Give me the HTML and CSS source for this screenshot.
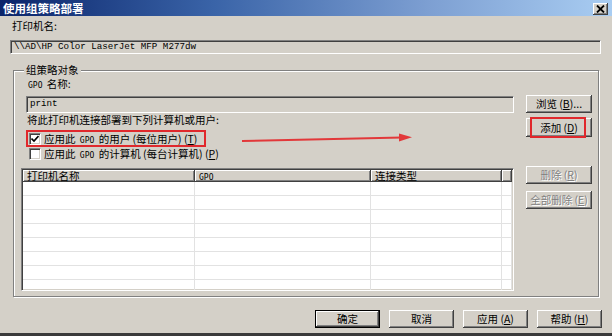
FILE: index.html
```html
<!DOCTYPE html>
<html lang="zh-CN">
<head>
    <meta charset="UTF-8">
    <title>使用组策略部署</title>
    <link rel="stylesheet" href="styles.css">
</head>
<body>
<div class="window">
    <div class="titlebar">
        <span class="title">使用组策略部署</span>
        <span class="close-btn">
            <svg width="9" height="8" viewBox="0 0 9 8"><path d="M1 0.5 L8 7.5 M8 0.5 L1 7.5" stroke="#000" stroke-width="1.8"/></svg>
        </span>
    </div>

    <div class="body">
        <div class="label printer-label">打印机名:</div>
        <div class="readonly-box mono">\\AD\HP Color LaserJet MFP M277dw</div>

        <fieldset class="group">
            <legend class="label">组策略对象</legend>
            <div class="label gpo-label"><span class="small-latin">GPO</span> 名称:</div>

            <div class="group-main">
                <div class="left-col">
                    <div class="edit-box mono">print</div>
                    <div class="label deploy-label">将此打印机连接部署到下列计算机或用户:</div>

                    <div class="check-row check-highlight">
                        <span class="checkbox">
                            <svg width="8" height="8" viewBox="0 0 8 8"><path d="M0.5 3.5 L3 6 L7.5 1" fill="none" stroke="#000" stroke-width="1.6"/></svg>
                        </span>
                        <span class="label">应用此 <span class="small-latin">GPO</span> 的用户 (每位用户) (<u>T</u>)</span>
                    </div>
                    <div class="check-row check-plain">
                        <span class="checkbox"></span>
                        <span class="label">应用此 <span class="small-latin">GPO</span> 的计算机 (每台计算机) (<u>P</u>)</span>
                    </div>

                    <div class="list-view">
                        <div class="list-head">
                            <span class="col col-name">打印机名称</span>
                            <span class="col col-gpo"><span class="small-latin">GPO</span></span>
                            <span class="col col-type">连接类型</span>
                            <span class="col col-end"></span>
                        </div>
                        <div class="list-row"><span class="col col-name"></span><span class="col col-gpo"></span><span class="col col-type"></span><span class="col col-end"></span></div>
                        <div class="list-row"><span class="col col-name"></span><span class="col col-gpo"></span><span class="col col-type"></span><span class="col col-end"></span></div>
                        <div class="list-row"><span class="col col-name"></span><span class="col col-gpo"></span><span class="col col-type"></span><span class="col col-end"></span></div>
                        <div class="list-row"><span class="col col-name"></span><span class="col col-gpo"></span><span class="col col-type"></span><span class="col col-end"></span></div>
                        <div class="list-row"><span class="col col-name"></span><span class="col col-gpo"></span><span class="col col-type"></span><span class="col col-end"></span></div>
                        <div class="list-row"><span class="col col-name"></span><span class="col col-gpo"></span><span class="col col-type"></span><span class="col col-end"></span></div>
                        <div class="list-row"><span class="col col-name"></span><span class="col col-gpo"></span><span class="col col-type"></span><span class="col col-end"></span></div>
                        <div class="list-row"><span class="col col-name"></span><span class="col col-gpo"></span><span class="col col-type"></span><span class="col col-end"></span></div>
                    </div>
                </div>

                <div class="right-col">
                    <div class="btn browse-btn">浏览 (<u>B</u>)...</div>
                    <div class="btn add-btn">添加 (<u>D</u>)<span class="mark-box"></span></div>
                    <div class="btn btn-disabled del-btn">删除 (<u>R</u>)</div>
                    <div class="btn btn-disabled delall-btn">全部删除 (<u>E</u>)</div>
                </div>
            </div>
        </fieldset>

        <div class="footer-buttons">
            <div class="btn btn-default">确定</div>
            <div class="btn">取消</div>
            <div class="btn">应用 (<u>A</u>)</div>
            <div class="btn">帮助 (<u>H</u>)</div>
        </div>
    </div>

    <!-- annotation arrow drawn over the dialog -->
    <svg class="arrow" width="176" height="16" viewBox="0 0 176 16">
        <path d="M2 11 L162 7.5" stroke="#e2383a" stroke-width="2"/>
        <path d="M159 3.5 L172 7.2 L159 11.5 Z" fill="#e2383a"/>
    </svg>
</div>
</body>
</html>
```

FILE: styles.css
```css
body {
    margin: 0;
    background: #d4d0c8;
}

.window {
    position: relative;
    width: 612px;
    height: 336px;
    box-sizing: border-box;
    display: flex;
    flex-direction: column;
    background: #d4d0c8;
    border-bottom: 3px solid #3a3a3a;
    overflow: hidden;
    font-family: "Noto Sans CJK SC", "Noto Sans", sans-serif;
    font-size: 10.5px;
    color: #000;
}

.titlebar {
    height: 16px;
    flex: none;
    display: flex;
    align-items: center;
    justify-content: space-between;
    padding: 0 4px 0 3px;
    background: linear-gradient(to right, #0a246a 0%, #3a64a8 35%, #7d9fd2 70%, #a9cdf2 100%);
}

.title {
    color: #fff;
    font-weight: bold;
    font-size: 11.5px;
    line-height: 14px;
}

.close-btn {
    width: 15px;
    height: 12px;
    margin-top: 1px;
    box-sizing: border-box;
    display: flex;
    align-items: center;
    justify-content: center;
    background: #d4d0c8;
    box-shadow: inset -1px -1px #404040, inset 1px 1px #fff, inset -2px -2px #808080;
}

.body {
    flex: 1;
    display: flex;
    flex-direction: column;
    padding: 0 10px;
}

.label {
    line-height: 12px;
    height: 12px;
    white-space: nowrap;
}

.small-latin {
    font-family: "DejaVu Sans Mono", monospace;
    font-size: 8px;
    margin: 0 2px;
}

.mono {
    font-family: "Liberation Mono", monospace;
    font-size: 9.2px;
    line-height: 12px;
    white-space: nowrap;
}

.printer-label {
    margin-top: 4px;
    margin-left: 2px;
}

.readonly-box,
.edit-box {
    box-sizing: border-box;
    border: 1px solid;
    border-color: #808080 #fff #fff #808080;
    box-shadow: inset 1px 1px #404040, inset -1px -1px #d4d0c8;
    background: #d4d0c8;
    padding-left: 3px;
}

.readonly-box {
    margin-top: 8px;
    height: 14px;
    width: 591px;
    line-height: 12px;
}

.group {
    margin: 10px 0 0 3px;
    width: 586px;
    box-sizing: border-box;
    padding: 2px 6px 5px 7px;
    border: 1px solid #808080;
    box-shadow: inset 1px 1px #fff, 1px 1px #fff;
    min-inline-size: 0;
}

.group legend {
    padding: 0 2px;
    margin-left: 3px;
    background: #d4d0c8;
}

.gpo-label {
    margin-left: 5px;
}

.group-main {
    display: flex;
    gap: 12px;
}

.left-col {
    width: 493px;
    display: flex;
    flex-direction: column;
}

.edit-box {
    margin: 6px 0 0 5px;
    width: 488px;
    height: 17px;
    line-height: 14px;
}

.deploy-label {
    margin: 1px 0 0 6px;
}

.check-row {
    display: flex;
    align-items: center;
    gap: 3px;
    box-sizing: border-box;
}

.check-highlight {
    margin: 4px 0 0 5px;
    width: 180px;
    height: 17px;
    padding-left: 1px;
    border: 2px solid #e0282c;
}

.check-plain {
    margin-left: 8px;
    height: 14px;
}

.checkbox {
    width: 12px;
    height: 12px;
    box-sizing: border-box;
    flex: none;
    display: flex;
    align-items: center;
    justify-content: center;
    background: #fff;
    border: 1px solid;
    border-color: #808080 #fff #fff #808080;
    box-shadow: inset 1px 1px #404040, inset -1px -1px #d4d0c8;
}

.list-view {
    margin-top: 7px;
    height: 123px;
    box-sizing: border-box;
    overflow: hidden;
    background: #fff;
    border: 1px solid;
    border-color: #808080 #fff #fff #808080;
    box-shadow: inset 1px 1px #404040, inset -1px -1px #d4d0c8;
    padding: 1px;
}

.list-head,
.list-row {
    display: flex;
}

.col {
    box-sizing: border-box;
    flex: none;
    white-space: nowrap;
}

.col-name { width: 172px; }
.col-gpo { width: 176px; }
.col-type { width: 131px; }
.col-end { width: 10px; }

.list-head .col {
    height: 12px;
    line-height: 12px;
    padding-left: 4px;
    background: #d4d0c8;
    box-shadow: inset -1px -1px #404040, inset 1px 1px #fff, inset -2px -2px #808080;
}

.list-head .small-latin {
    margin: 0;
}

.list-row .col {
    height: 14px;
    border-bottom: 1px solid #e2e2e2;
    border-right: 1px solid #e2e2e2;
}

.right-col {
    width: 66px;
    display: flex;
    flex-direction: column;
}

.btn {
    box-sizing: border-box;
    height: 18px;
    display: flex;
    align-items: center;
    justify-content: center;
    position: relative;
    background: #d4d0c8;
    box-shadow: inset -1px -1px #404040, inset 1px 1px #fff, inset -2px -2px #808080;
    white-space: nowrap;
    line-height: 12px;
}

.browse-btn { margin-top: 5px; }

.add-btn {
    margin-top: 5px;
    height: 19px;
}

.mark-box {
    position: absolute;
    left: 4px;
    right: 6px;
    top: -1px;
    bottom: -1px;
    border: 2px solid #e0282c;
}

.del-btn { margin-top: 29px; }
.delall-btn { margin-top: 7px; }

.btn-disabled {
    color: #808080;
    text-shadow: 1px 1px #fff;
}

.footer-buttons {
    display: flex;
    justify-content: flex-end;
    gap: 9px;
    margin-top: 13px;
}

.footer-buttons .btn {
    width: 65px;
}

.btn-default {
    border: 1px solid #000;
}

.arrow {
    position: absolute;
    left: 240px;
    top: 130px;
}
```
